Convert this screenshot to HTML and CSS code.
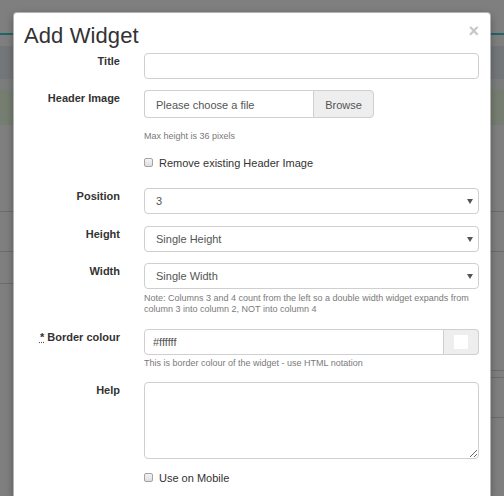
FILE: index.html
```html
<!DOCTYPE html>
<html>
<head>
<meta charset="utf-8">
<link rel="stylesheet" href="styles.css">
</head>
<body>
<div class="backdrop">
  <div class="bg-space h33"></div>
  <div class="bg-teal"></div>
  <div class="bg-space h11"></div>
  <div class="bg-nav"></div>
  <div class="bg-sub"></div>
  <div class="bg-alert"></div>
  <div class="bg-space h86"></div>
  <div class="rule"></div>
  <div class="bg-space h39"></div>
  <div class="rule"></div>
  <div class="bg-space h31"></div>
  <div class="rule rule-left"></div>
  <div class="bg-space h86"></div>
  <div class="rule rule-right"></div>
  <div class="bg-space h6"></div>
  <div class="rule rule-right"></div>
  <div class="bg-space h39"></div>
  <div class="rule rule-right"></div>
</div>

<div class="modal">
  <div class="modal-header">
    <h4 class="modal-title">Add Widget</h4>
    <span class="close">×</span>
  </div>
  <div class="modal-body">
    <div class="form-row mb11">
      <label>Title</label>
      <div class="field"><input class="control" type="text"></div>
    </div>

    <div class="form-row mb17">
      <label>Header Image</label>
      <div class="field">
        <div class="file-group">
          <span class="file-name">Please choose a file</span>
          <span class="browse">Browse</span>
        </div>
        <p class="help mt13">Max height is 36 pixels</p>
        <div class="check mt14"><span class="box"></span><span>Remove existing Header Image</span></div>
      </div>
    </div>

    <div class="form-row mb12">
      <label>Position</label>
      <div class="field"><div class="select"><select class="control"><option>3</option></select></div></div>
    </div>

    <div class="form-row mb11">
      <label>Height</label>
      <div class="field"><div class="select"><select class="control"><option>Single Height</option></select></div></div>
    </div>

    <div class="form-row mb14">
      <label>Width</label>
      <div class="field">
        <div class="select"><select class="control"><option>Single Width</option></select></div>
        <p class="help mt4">Note: Columns 3 and 4 count from the left so a double width widget expands from column 3 into column 2, NOT into column 4</p>
      </div>
    </div>

    <div class="form-row mb13">
      <label><abbr title="required">*</abbr> Border colour</label>
      <div class="field">
        <div class="color-group">
          <input class="control color-input" type="text" value="#ffffff">
          <span class="addon"><span class="swatch"></span></span>
        </div>
        <p class="help mt3">This is border colour of the widget - use HTML notation</p>
      </div>
    </div>

    <div class="form-row mb12">
      <label>Help</label>
      <div class="field"><textarea class="control area"></textarea></div>
    </div>

    <div class="form-row">
      <span></span>
      <div class="field">
        <div class="check"><span class="box"></span><span>Use on Mobile</span></div>
      </div>
    </div>
  </div>
</div>
</body>
</html>
```

FILE: styles.css
```css
* { box-sizing: border-box; }

html, body {
  margin: 0;
  padding: 0;
}

body {
  width: 504px;
  height: 496px;
  overflow: hidden;
  background: #7f7f7f;
  font-family: "Liberation Sans", Arial, sans-serif;
  position: relative;
}

/* ---------- backdrop page ---------- */
.backdrop { width: 504px; }
.bg-space { width: 100%; }
.h6 { height: 6px; }
.h11 { height: 11px; }
.h31 { height: 31px; }
.h33 { height: 33px; }
.h39 { height: 39px; }
.h86 { height: 86px; }
.bg-teal { height: 2px; background: #1f6767; }
.bg-nav { height: 33px; background: #74777a; }
.bg-sub { height: 11px; background: #7b7c7c; }
.bg-alert { height: 35px; background: #757e70; }
.rule { height: 1px; background: #6c6c6c; }
.rule-left { width: 50%; }
.rule-right { width: 50%; margin-left: 50%; }

/* ---------- modal ---------- */
.modal {
  position: absolute;
  left: 13px;
  top: 12px;
  width: 478px;
  height: 484px;
  background: #fff;
  border: 1px solid rgba(0, 0, 0, 0.3);
  border-bottom: 0;
  border-radius: 4px 4px 0 0;
  box-shadow: 0 3px 9px rgba(0, 0, 0, 0.3);
  overflow: hidden;
}

.modal-header {
  display: flex;
  justify-content: space-between;
  align-items: flex-start;
  padding: 10px 11px 0 10px;
  height: 35px;
}

.modal-title {
  margin: 0;
  font-size: 22px;
  line-height: 25px;
  font-weight: normal;
  color: #333;
  letter-spacing: 0.1px;
}

.close {
  font-size: 18px;
  line-height: 18px;
  font-weight: bold;
  color: #c6c6c6;
  margin-top: -1px;
}

.modal-body {
  padding: 5px 11px 0 11px;
}

.form-row {
  display: grid;
  grid-template-columns: 95px 1fr;
  column-gap: 24px;
}

.mb11 { margin-bottom: 11px; }
.mb12 { margin-bottom: 12px; }
.mb13 { margin-bottom: 13px; }
.mb14 { margin-bottom: 14px; }
.mb17 { margin-bottom: 17px; }
.mt3 { margin-top: 3px; }
.mt4 { margin-top: 4px; }
.mt13 { margin-top: 13px; }
.mt14 { margin-top: 14px; }

label {
  text-align: right;
  font-weight: bold;
  font-size: 11px;
  line-height: 15px;
  padding-top: 1px;
  color: #333;
}

abbr {
  text-decoration: underline dotted #555;
  cursor: help;
}

.field { min-width: 0; }

.control {
  display: block;
  width: 100%;
  height: 26px;
  margin: 0;
  padding: 0 11px;
  border: 1px solid #cfcfcf;
  border-radius: 4px;
  background: #fff;
  font-family: "Liberation Sans", Arial, sans-serif;
  font-size: 11px;
  color: #555;
  outline: none;
}

select.control {
  -webkit-appearance: none;
  appearance: none;
}

.select { position: relative; }
.select::after {
  content: "";
  position: absolute;
  right: 6px;
  top: 11px;
  border-left: 3px solid transparent;
  border-right: 3px solid transparent;
  border-top: 5px solid #555;
}

/* file input */
.file-group {
  display: flex;
  width: 230px;
  height: 28px;
  font-size: 11px;
}
.file-name {
  flex: 1;
  display: flex;
  align-items: center;
  padding: 2px 11px 0 11px;
  border: 1px solid #cfcfcf;
  border-right: 0;
  border-radius: 4px 0 0 4px;
  color: #555;
}
.browse {
  width: 61px;
  display: flex;
  align-items: center;
  justify-content: center;
  padding-top: 1px;
  background: #eee;
  border: 1px solid #cfcfcf;
  border-radius: 0 4px 4px 0;
  color: #555;
}

.help {
  margin-bottom: 0;
  font-size: 9px;
  line-height: 11px;
  color: #7a7a7a;
}

.check {
  display: flex;
  align-items: flex-start;
  font-size: 11px;
  line-height: 15px;
  color: #333;
}
.box {
  width: 9px;
  height: 9px;
  margin: 2px 6px 0 0;
  border: 1px solid #a3a3a3;
  border-radius: 2px;
  background: linear-gradient(#f4f4f4, #dedede);
  flex: none;
}

/* colour group */
.color-group {
  display: flex;
  height: 26px;
}
.color-input {
  flex: 1;
  padding: 0 8px;
  border-radius: 4px 0 0 4px;
}
.addon {
  width: 35px;
  flex: none;
  display: flex;
  align-items: center;
  justify-content: center;
  background: #eee;
  border: 1px solid #cfcfcf;
  border-left: 0;
  border-radius: 0 4px 4px 0;
}
.swatch {
  width: 14px;
  height: 14px;
  background: #fff;
}

.area {
  height: 77px;
  resize: vertical;
  padding: 6px 11px;
}
```
